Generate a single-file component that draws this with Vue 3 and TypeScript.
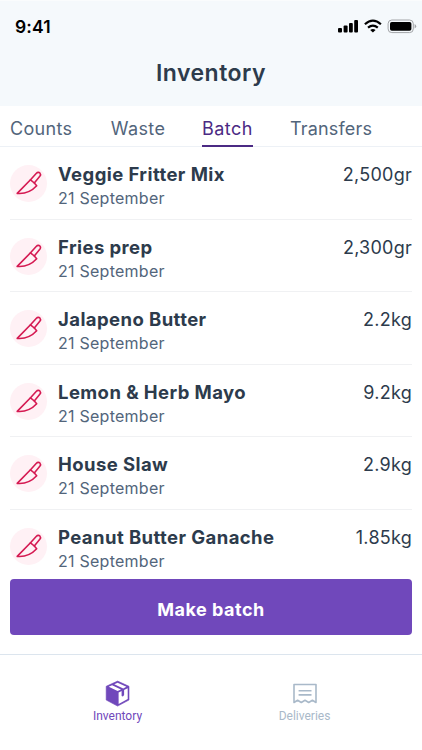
<script setup lang="ts">
interface Batch {
  name: string
  date: string
  amount: string
}

const tabs: string[] = ['Counts', 'Waste', 'Batch', 'Transfers']
const activeTab = 'Batch'

const batches: Batch[] = [
  { name: 'Veggie Fritter Mix', date: '21 September', amount: '2,500gr' },
  { name: 'Fries prep', date: '21 September', amount: '2,300gr' },
  { name: 'Jalapeno Butter', date: '21 September', amount: '2.2kg' },
  { name: 'Lemon & Herb Mayo', date: '21 September', amount: '9.2kg' },
  { name: 'House Slaw', date: '21 September', amount: '2.9kg' },
  { name: 'Peanut Butter Ganache', date: '21 September', amount: '1.85kg' },
]
</script>

<template>
  <div class="screen">
    <header class="header">
      <div class="status">
        <span class="time">9:41</span>
        <svg class="indicators" width="80" height="16" viewBox="0 0 80 16">
          <rect x="0" y="9" width="4" height="4.6" rx="1" />
          <rect x="5.6" y="6.6" width="4" height="7" rx="1" />
          <rect x="11" y="4" width="3.8" height="9.6" rx="1" />
          <rect x="16.2" y="1" width="3.8" height="12.6" rx="1" />
          <g fill="none" stroke="#000" stroke-width="2.2">
            <path d="M26.9 5.3Q34.9-1.9 42.9 5.3" />
            <path d="M30 8.7Q34.9 4.4 39.8 8.7" />
          </g>
          <path d="M32.2 11Q34.9 8.8 37.6 11L34.9 13.6Z" />
          <rect x="50.1" y="1" width="25.2" height="12.6" rx="3.7" fill="none" stroke="#a3a5a8" />
          <rect x="52" y="2.9" width="21.4" height="8.8" rx="1.8" />
          <path d="M76.6 5.1Q78.2 5.8 78.2 7.3Q78.2 8.8 76.6 9.5Z" fill="#a3a5a8" />
        </svg>
      </div>
      <h1 class="title">Inventory</h1>
    </header>

    <nav class="tabs">
      <a v-for="tab in tabs" :key="tab" class="tab" :class="{ active: tab === activeTab }">{{ tab }}</a>
    </nav>

    <main class="list">
      <article v-for="batch in batches" :key="batch.name" class="row">
        <div class="badge">
          <svg width="37" height="37" viewBox="0 0 37 37">
            <g fill="none" stroke="#d51a52" stroke-width="1.6" stroke-linejoin="round" stroke-linecap="round">
              <path d="M20.5 14.8L7.2 28.4C13.8 29 21.5 26.4 26.7 20.8L24.3 18" />
              <path d="M20.5 14.8L26.4 8.3C27.5 7.1 29 7.1 29.9 8C30.8 9 30.6 10.2 29.8 11.3L24.3 18Z" />
            </g>
          </svg>
        </div>
        <div class="details">
          <h2 class="name">{{ batch.name }}</h2>
          <p class="date">{{ batch.date }}</p>
        </div>
        <span class="amount">{{ batch.amount }}</span>
      </article>
    </main>

    <div class="action">
      <button class="make">Make batch</button>
    </div>

    <footer class="bottom">
      <a class="item current">
        <svg width="26" height="27" viewBox="0 0 26 27">
          <path d="M12.6 1.1L24 6.3V20L12.6 26.1L1.2 20V6.3Z" fill="#7048bb" stroke="#7048bb" stroke-width="0.6" stroke-linejoin="round" />
          <path d="M13.6 12.6L22.7 8.3V19.1L13.6 23.9Z" fill="#fff" />
          <path d="M3.7 6.8L7.1 5.2L16 9.5L12.6 11.1ZM9.3 4.2L12.6 2.7L21.4 6.8L18.2 8.4Z" fill="#fff" />
          <path d="M16.6 10.4L19.1 9.2V15L17.9 16.4L16.6 16Z" fill="#7048bb" />
        </svg>
        <span>Inventory</span>
      </a>
      <a class="item">
        <svg width="26" height="27" viewBox="0 0 26 27">
          <g fill="none" stroke="#a9b9c9" stroke-width="1.6">
            <path d="M2 22.5V4.5H24V22.5L20.4 20.3L16.7 22.5L13 20.3L9.3 22.5L5.6 20.3L2 22.5Z" stroke-linejoin="round" />
            <path d="M6.6 10.8H19.5M6.6 14.9H19.5" />
          </g>
        </svg>
        <span>Deliveries</span>
      </a>
    </footer>
  </div>
</template>

<style>
body {
  margin: 0;
  background: #fff;
}
</style>

<style scoped>
.screen {
  display: flex;
  flex-direction: column;
  width: 422px;
  height: 750px;
  overflow: hidden;
  background: #fff;
  color: #2d3b4c;
  font-family: Inter, 'Liberation Sans', sans-serif;
}

.header {
  box-sizing: border-box;
  flex: none;
  height: 106px;
  background: #f5f9fc;
  border-top: 1px solid #fafcfd;
}

.status {
  display: flex;
  align-items: center;
  justify-content: space-between;
  height: 50px;
  padding: 0 4px 0 15px;
}

.time {
  color: #000;
  font-size: 17.5px;
  font-weight: 600;
  letter-spacing: 0.1px;
}

.indicators {
  display: block;
  margin-top: 2px;
}

.title {
  margin: 7px 0 0;
  font-size: 23px;
  font-weight: 640;
  line-height: 31px;
  letter-spacing: 0.5px;
  text-align: center;
}

.tabs {
  box-sizing: border-box;
  display: flex;
  flex: none;
  gap: 38px;
  height: 41px;
  padding-left: 10px;
  border-bottom: 1px solid #edf1f6;
}

.tab {
  box-sizing: border-box;
  height: 41px;
  color: #52657b;
  font-size: 18px;
  line-height: 46px;
  letter-spacing: 0.3px;
}

.tab:nth-child(2) {
  margin-left: 0.5px;
  letter-spacing: 0.4px;
}

.tab:nth-child(3) {
  margin-left: -1.5px;
  letter-spacing: 0.5px;
}

.tab:nth-child(4) {
  margin-left: -1px;
  letter-spacing: 0.2px;
}

.tab.active {
  color: #4b2a84;
  border-bottom: 2px solid #4b2a84;
}

.list {
  flex: none;
  height: 432px;
  padding: 0 10px;
  overflow: hidden;
}

.row {
  box-sizing: border-box;
  display: flex;
  height: 72.6px;
  padding-top: 15px;
  border-bottom: 1px solid #f0f1f3;
}

.badge {
  width: 37px;
  height: 37px;
  margin-top: 3px;
  border-radius: 50%;
  background: #fff1f5;
}

.badge svg {
  display: block;
}

.details {
  flex: 1;
  margin-left: 11px;
}

.name {
  margin: 0;
  font-size: 18.5px;
  font-weight: 650;
  line-height: 25px;
  letter-spacing: 0.42px;
}

.date {
  margin: 0;
  color: #52657b;
  font-size: 16px;
  line-height: 23px;
  letter-spacing: 0.25px;
}

.amount {
  font-size: 18px;
  line-height: 25px;
  letter-spacing: 0.25px;
}

.action {
  flex: none;
  height: 75px;
  padding: 0 10px;
}

.make {
  display: block;
  width: 100%;
  height: 56px;
  padding: 5px 0 0;
  border: 0;
  border-radius: 4px;
  background: #7048bb;
  color: #fff;
  font: 650 18px Inter, 'Liberation Sans', sans-serif;
  letter-spacing: 0.5px;
}

.bottom {
  display: flex;
  flex: 1;
  padding: 25px 24px 0;
  border-top: 1px solid #dce5ee;
}

.item {
  display: flex;
  flex: 1;
  flex-direction: column;
  align-items: center;
  color: #a9b9c9;
  font: 12px/18px Roboto, 'Liberation Sans', sans-serif;
  letter-spacing: 0;
}

.item.current {
  color: #7048bb;
}
</style>
